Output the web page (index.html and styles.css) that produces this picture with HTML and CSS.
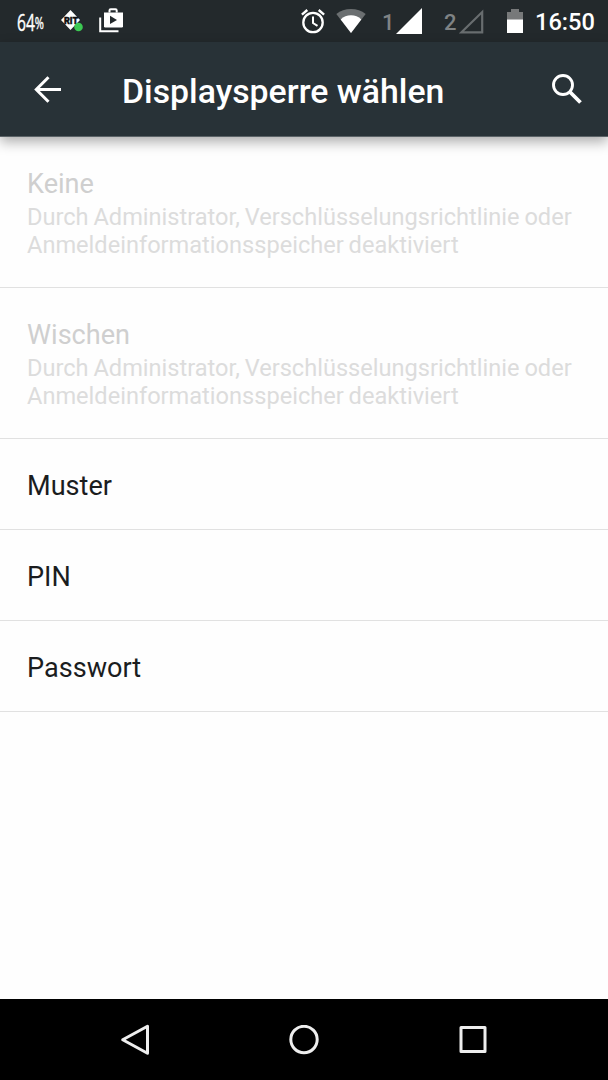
FILE: index.html
```html
<!DOCTYPE html>
<html lang="de">
<head>
  <meta charset="UTF-8">
  <meta name="viewport" content="width=device-width, initial-scale=1.0">
  <title>Displaysperre wählen</title>
  <link rel="stylesheet" href="styles.css">
</head>
<body>
  <div class="status-bar">
    <div class="status-left">
      <span class="percent"><span class="percent-text">64<small>%</small></span></span>
      <svg class="icon-app" width="24" height="26" viewBox="0 0 24 26">
        <path d="M9.500 1 L19 11 L9.500 21 L0 11 Z" fill="#fff"/>
        <text class="app-label" x="10" y="14.500" text-anchor="middle">RIT</text>
        <circle cx="17.500" cy="18" r="4.300" fill="#3cc953"/>
      </svg>
      <svg class="icon-store" width="26" height="26" viewBox="0 0 26 26">
        <path d="M1.200 9.500 V23.200 H19.500" fill="none" stroke="#fff" stroke-width="2"/>
        <path d="M10.500 4.500 V2.500 Q10.500 1.300 11.700 1.300 H16.500 Q17.700 1.300 17.700 2.500 V4.500" fill="none" stroke="#fff" stroke-width="2"/>
        <path d="M5 4.500 H24 V18.300 Q24 19.500 22.800 19.500 H6.200 Q5 19.500 5 18.300 Z" fill="#fff"/>
        <path d="M11 7.800 L18 12 L11 16 Z" fill="#23292c"/>
      </svg>
    </div>
    <div class="status-right">
      <svg class="icon-alarm" width="24" height="26" viewBox="0 0 24 26" fill="none" stroke="#fff">
        <circle cx="12" cy="14.500" r="9.700" stroke-width="2.300"/>
        <path d="M12 8.500 V15 L16.500 17.800" stroke-width="2"/>
        <path d="M0.900 6.700 L6.300 2 M23.100 6.700 L17.700 2" stroke-width="2.400"/>
      </svg>
      <svg class="icon-wifi" width="30" height="26" viewBox="0 0 30 26">
        <path d="M15 25 L0.300 6 Q6.500 1 15 1 Q23.500 1 29.700 6 Z" fill="#6b6f71"/>
        <path d="M15 25 L4.700 11.500 Q9 7.300 15 7.300 Q21 7.300 25.300 11.500 Z" fill="#fff"/>
      </svg>
      <span class="sim sim-one">1</span>
      <svg class="icon-signal" width="26" height="26" viewBox="0 0 26 26">
        <path d="M0 26 L26 0 V26 Z" fill="#fff"/>
      </svg>
      <span class="sim sim-two">2</span>
      <svg class="icon-signal-off" width="25" height="25" viewBox="0 0 25 25">
        <path d="M2.500 23.300 L23.200 3 V23.300 Z" fill="none" stroke="#686d6f" stroke-width="2.200"/>
      </svg>
      <svg class="icon-battery" width="16" height="25" viewBox="0 0 16 25">
        <path d="M0 3 H4 V0 H12 V3 H16 V11 H0 Z" fill="#77797a"/>
        <path d="M0 10.500 H16 V24 H0 Z" fill="#fff"/>
      </svg>
      <span class="clock">16:50</span>
    </div>
  </div>

  <header class="toolbar">
    <svg class="icon-back" width="28" height="28" viewBox="0 0 28 28" fill="none" stroke="#fff" stroke-width="3">
      <path d="M27 14.500 H3 M14.500 2.300 L2.300 14.500 L14.500 26.700"/>
    </svg>
    <h1>Displaysperre wählen</h1>
    <svg class="icon-search" width="30" height="30" viewBox="0 0 30 30" fill="none" stroke="#fff">
      <circle cx="11" cy="11" r="9.500" stroke-width="2.900"/>
      <path d="M18 18 L28.500 28.500" stroke-width="3.800"/>
    </svg>
  </header>

  <main>
    <ul class="options">
      <li class="option disabled">
        <h2>Keine</h2>
        <p>Durch Administrator, Verschlüsselungsrichtlinie oder Anmeldeinformationsspeicher deaktiviert</p>
      </li>
      <li class="option disabled">
        <h2>Wischen</h2>
        <p>Durch Administrator, Verschlüsselungsrichtlinie oder Anmeldeinformationsspeicher deaktiviert</p>
      </li>
      <li class="option"><h2>Muster</h2></li>
      <li class="option"><h2>PIN</h2></li>
      <li class="option"><h2>Passwort</h2></li>
    </ul>
  </main>

  <nav class="nav-bar">
    <svg width="30" height="32" viewBox="0 0 30 32" fill="none" stroke="#eee" stroke-width="3" stroke-linejoin="round">
      <path d="M27.500 2.300 V29.300 L2.700 15.800 Z"/>
    </svg>
    <svg width="30" height="30" viewBox="0 0 30 30" fill="none" stroke="#eee" stroke-width="3">
      <circle cx="15" cy="14.500" r="13.200"/>
    </svg>
    <svg width="30" height="30" viewBox="0 0 30 30" fill="none" stroke="#eee" stroke-width="3" stroke-linejoin="round">
      <rect x="3" y="2.500" width="24" height="24"/>
    </svg>
  </nav>
</body>
</html>
```

FILE: styles.css
```css
:root {
  --status-color: #23292c;
  --toolbar-color: #283237;
  --text-color: #1b1d1e;
  --divider-color: #e1e1e1;
}

* {
  box-sizing: border-box;
  margin: 0;
  padding: 0;
}

body {
  display: flex;
  flex-direction: column;
  height: 1080px;
  font-family: Roboto, sans-serif;
  color: var(--text-color);
  background: #fefefe;
  overflow: hidden;
}

svg {
  display: block;
  flex: none;
}

/* Status bar */
.status-bar {
  display: flex;
  justify-content: space-between;
  height: 42px;
  padding: 8px 14px 0 17px;
  background: var(--status-color);
  color: #fff;
}

.status-left,
.status-right {
  display: flex;
  align-items: flex-start;
}

.percent {
  width: 27px;
  font-family: 'Open Sans', sans-serif;
  font-size: 24px;
  line-height: 27px;
}

.percent-text {
  display: inline-block;
  white-space: nowrap;
  transform: scaleX(0.65);
  transform-origin: left;
  -webkit-text-stroke: 0.4px #fff;
}

.percent small {
  font-size: 17px;
  vertical-align: 2px;
}

.icon-app {
  margin: 1px 0 0 17px;
}

.app-label {
  font-size: 9px;
  font-weight: 900;
  fill: #111;
  stroke: #111;
  stroke-width: 0.4px;
}

.icon-store {
  margin-left: 14px;
}

.icon-wifi {
  margin-left: 11px;
}

.sim {
  font-size: 22px;
  font-weight: 500;
  line-height: 30px;
  color: #7f8385;
}

.sim-one {
  width: 14px;
  margin-left: 16px;
}

.sim-two {
  width: 15px;
  margin-left: 22px;
}

.icon-signal-off {
  margin-top: 1px;
}

.icon-battery {
  margin: 1px 0 0 23px;
}

.clock {
  width: 59px;
  margin-left: 12px;
  font-size: 23.600px;
  font-weight: 500;
  line-height: 29px;
}

/* Toolbar */
.toolbar {
  position: relative;
  display: flex;
  align-items: center;
  height: 95px;
  padding: 0 26px 1px 34px;
  background: var(--toolbar-color);
  border-bottom: 1px solid #5b6367;
  color: #fff;
  box-shadow: 0 5px 12px rgba(0, 0, 0, 0.32);
}

.toolbar h1 {
  flex: 1;
  margin: 7px 0 0 60px;
  font-size: 33.800px;
  font-weight: 500;
  line-height: 40px;
  white-space: nowrap;
}

/* Options */
main {
  flex: 1;
}

.options {
  list-style: none;
}

.option {
  height: 91px;
  padding: 31px 27px 0;
  border-bottom: 1px solid var(--divider-color);
}

.option h2 {
  font-size: 27.100px;
  font-weight: 400;
  line-height: 32px;
}

.option p {
  font-size: 23.600px;
  line-height: 28px;
  word-spacing: -1px;
}

.disabled {
  height: 151px;
}

.disabled h2 {
  margin-bottom: 3px;
  color: #cfcfcf;
}

.disabled p {
  color: #dcdcdc;
}

/* Navigation bar */
.nav-bar {
  display: flex;
  align-items: center;
  justify-content: center;
  gap: 139px;
  height: 81px;
  background: #000;
}
```
